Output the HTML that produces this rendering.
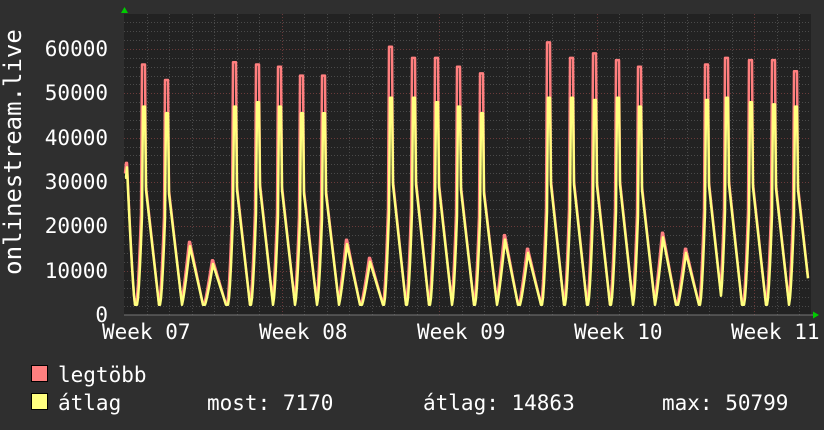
<!DOCTYPE html>
<html><head><meta charset="utf-8"><style>
html,body{margin:0;padding:0;background:#2f2f2f;}
svg{display:block}
text{font-family:"DejaVu Sans Mono","Liberation Mono",monospace;font-size:21px;fill:#fff}
</style></head><body>
<svg id="s" width="824" height="430" xmlns="http://www.w3.org/2000/svg">
<rect width="824" height="430" fill="#2f2f2f"/>
<rect x="124" y="14" width="687" height="301" fill="#222"/>
<g id="grid"></g>
<g id="data"></g>
<line x1="124" y1="315" x2="814" y2="315" stroke="#777" stroke-width="1"/>
<polygon points="121,13 128,13 124.5,7" fill="#0c0"/>
<polygon points="813,311.5 813,318.5 819,315" fill="#0c0"/>
<g text-anchor="end">
<text x="108" y="56">60000</text>
<text x="108" y="100">50000</text>
<text x="108" y="145">40000</text>
<text x="108" y="189">30000</text>
<text x="108" y="233">20000</text>
<text x="108" y="278">10000</text>
<text x="108" y="322">0</text>
</g>
<text x="102" y="339">Week 07</text>
<text x="259" y="339">Week 08</text>
<text x="417" y="339">Week 09</text>
<text x="574" y="339">Week 10</text>
<text x="731" y="339">Week 11</text>
<text transform="translate(21,152) rotate(-90)" text-anchor="middle" style="font-size:24px">onlinestream.live</text>
<rect x="31.5" y="365.5" width="16" height="16" fill="#ff7f7f" stroke="#000"/>
<rect x="31.5" y="393.5" width="16" height="16" fill="#ffff7f" stroke="#000"/>
<text x="58" y="382">legtöbb</text>
<text x="58" y="410">átlag</text>
<text x="207" y="410">most: 7170</text>
<text x="423" y="410">átlag: 14863</text>
<text x="662" y="410">max: 50799</text>
</svg>
<script>
var NS="http://www.w3.org/2000/svg";
function el(p,t,a){var e=document.createElementNS(NS,t);for(var k in a)e.setAttribute(k,a[k]);p.appendChild(e);return e;}
var g=document.getElementById('grid');
function Y(v){return 315-v*266/60000;}
for(var v=2000;v<=66000;v+=2000){var y=Math.round(Y(v))+0.5;if(y<14)break;
 el(g,'line',{x1:124,x2:811,y1:y,y2:y,stroke:(v%10000==0)?'#6a3a3a':'#4a4a4a','stroke-dasharray':'1,2'});}
for(var x=124+22.5;x<811;x+=22.5){var xx=Math.round(x)+0.5;var maj=Math.abs(((x-124)/157.5)-Math.round((x-124)/157.5))<0.01;
 el(g,'line',{x1:xx,x2:xx,y1:14,y2:315,stroke:maj?'#6a3a3a':'#4a4a4a','stroke-dasharray':'1,2'});}
var peaks=[[143,56500,47000,1],[166,53000,45500,1],[190,16000,15500,0],[213,12000,11500,0],
[234,57000,47000,1],[257,56500,48000,1],[279,56000,47000,1],[301,54000,45500,1],[323,54000,45500,1],
[347,16500,16000,0],[370,12500,12000,0],
[390,60500,49000,1],[413,58000,49000,1],[436,58000,48000,1],[458,56000,47000,1],[481,54500,45500,1],
[505,17500,17000,0],[528,14500,14000,0],
[548,61500,49000,1],[571,58000,49000,1],[594,59000,48500,1],[617,57500,49000,1],[639,56000,47000,1],
[663,18000,17500,0],[686,14500,14000,0],
[706,56500,48500,1],[726,58000,49000,1],[750,57500,48000,1],[773,57500,47500,1],[795,55000,47000,1]];
function val(x,mx){var best=2300,isPk=false;
 for(var i=0;i<peaks.length;i++){var p=peaks[i],d=x-p[0],pk=mx?p[1]:p[2],a=p[2],r=0;
  if(p[3]){
   if(d>=-6&&d<0){r=2300+(a*0.62-2300)*Math.pow((d+6)/6,1.6);}
   else if(d>=0&&d<=2){r=pk;isPk=true;}
   else if(d>2&&d<=16){r=2300+(a*0.6-2300)*(1-(d-3)/13);}
  }else{
   if(d>=-8&&d<=0){r=2300+(pk-2300)*Math.pow((d+8)/8,1.2);}
   else if(d>0&&d<=13){r=2300+(pk-2300)*(1-d/13);}
  }
  if(r>best)best=r;}
 if(x<127) best=31000; else if(x<135) best=Math.max(best,31000*Math.pow(1-(x-127)/8,1.3)+2300);
 if(x>=799) best=Math.max(2300,Math.min(best,47000*0.6*(1-(x-798)/12)+7000));
 if(mx&&!isPk)best*=1.03;
 return best;}
var dg=document.getElementById('data');
['#ff7f7f','#ffff7f'].forEach(function(c,k){var pts=[];
 for(var x=125;x<=808;x++){var v=k==0?Math.max(val(x,true),val(x+1,true)):val(x,false);pts.push(x+','+Y(v).toFixed(1));}
 el(dg,'polyline',{points:pts.join(' '),fill:'none',stroke:c,'stroke-width':2.5,'stroke-linejoin':'round'});});
</script>
</body></html>
